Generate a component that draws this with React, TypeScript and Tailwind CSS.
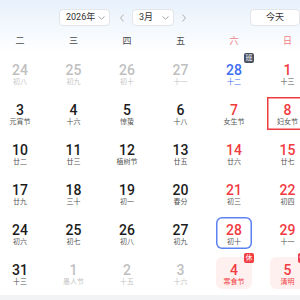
import React from "react";

type Kind = "other" | "normal" | "weekend" | "work" | "holiday";

type Day = {
  n: number;
  lunar: string;
  kind: Kind;
  today?: boolean;
  selected?: boolean;
};

const rows: Day[][] = [
  [
    { n: 24, lunar: "初八", kind: "other" },
    { n: 25, lunar: "初九", kind: "other" },
    { n: 26, lunar: "初十", kind: "other" },
    { n: 27, lunar: "十一", kind: "other" },
    { n: 28, lunar: "十二", kind: "work" },
    { n: 1, lunar: "十三", kind: "weekend" },
  ],
  [
    { n: 3, lunar: "元宵节", kind: "normal" },
    { n: 4, lunar: "十六", kind: "normal" },
    { n: 5, lunar: "惊蛰", kind: "normal" },
    { n: 6, lunar: "十八", kind: "normal" },
    { n: 7, lunar: "女生节", kind: "weekend" },
    { n: 8, lunar: "妇女节", kind: "weekend", selected: true },
  ],
  [
    { n: 10, lunar: "廿二", kind: "normal" },
    { n: 11, lunar: "廿三", kind: "normal" },
    { n: 12, lunar: "植树节", kind: "normal" },
    { n: 13, lunar: "廿五", kind: "normal" },
    { n: 14, lunar: "廿六", kind: "weekend" },
    { n: 15, lunar: "廿七", kind: "weekend" },
  ],
  [
    { n: 17, lunar: "廿九", kind: "normal" },
    { n: 18, lunar: "三十", kind: "normal" },
    { n: 19, lunar: "初一", kind: "normal" },
    { n: 20, lunar: "春分", kind: "normal" },
    { n: 21, lunar: "初三", kind: "weekend" },
    { n: 22, lunar: "初四", kind: "weekend" },
  ],
  [
    { n: 24, lunar: "初六", kind: "normal" },
    { n: 25, lunar: "初七", kind: "normal" },
    { n: 26, lunar: "初八", kind: "normal" },
    { n: 27, lunar: "初九", kind: "normal" },
    { n: 28, lunar: "初十", kind: "weekend", today: true },
    { n: 29, lunar: "十一", kind: "weekend" },
  ],
  [
    { n: 31, lunar: "十三", kind: "normal" },
    { n: 1, lunar: "愚人节", kind: "other" },
    { n: 2, lunar: "十五", kind: "other" },
    { n: 3, lunar: "十六", kind: "other" },
    { n: 4, lunar: "寒食节", kind: "holiday" },
    { n: 5, lunar: "清明", kind: "holiday" },
  ],
];

const weekdays = ["二", "三", "四", "五", "六", "日"];

const numColor: Record<Kind, string> = {
  other: "text-[#bfbfbf]",
  normal: "text-[#1c1c1c]",
  weekend: "text-[#f23b3f]",
  work: "text-[#3d6df2]",
  holiday: "text-[#f23b3f]",
};

const lunarColor: Record<Kind, string> = {
  other: "text-[#c4c4c4]",
  normal: "text-[#555]",
  weekend: "text-[#555]",
  work: "text-[#3d6df2]",
  holiday: "text-[#f23b3f]",
};

const ChevronDown = () => (
  <svg width="7" height="4" viewBox="0 0 7 4" fill="none">
    <path d="M0.5 0.5L3.5 3.2L6.5 0.5" stroke="#9a9a9a" strokeWidth="0.9" />
  </svg>
);

const Arrow = ({ right }: { right?: boolean }) => (
  <svg width="4" height="8" viewBox="0 0 4 8" fill="none">
    <path
      d={right ? "M0.5 0.5L3.5 4L0.5 7.5" : "M3.5 0.5L0.5 4L3.5 7.5"}
      stroke="#a8a8a8"
      strokeWidth="0.9"
    />
  </svg>
);

const SELECTED_BOX = "w-[42px] h-[33px] shadow-[inset_0_0_0_1.5px_#ee3b3e]";
const TODAY_BOX = "w-[36px] h-[32px] rounded-[6px] shadow-[inset_0_0_0_1.5px_#5b82f0]";
const HOLIDAY_BOX = "w-[36px] h-[32px] rounded-[6px] bg-[#fff0f0]";
const PLAIN_BOX = "w-[36px] h-[32px] rounded-[6px]";

const Cell = ({ d }: { d: Day }) => {
  const box = d.selected
    ? SELECTED_BOX
    : d.today
      ? TODAY_BOX
      : d.kind === "holiday"
        ? HOLIDAY_BOX
        : PLAIN_BOX;

  return (
    <div className="h-[40px] flex items-center justify-center">
      <div className={`${box} relative flex flex-col items-center justify-center pt-[2px]`}>
        <span className={`text-[14px] leading-[14px] font-medium ${numColor[d.kind]}`}>
          {d.n}
        </span>
        <span className={`text-[7px] leading-[8px] mt-[1px] ${lunarColor[d.kind]}`}>
          {d.lunar}
        </span>
        {d.kind === "work" && (
          <span className="absolute -top-[4px] -right-[2px] w-[10px] h-[10px] rounded-[2px] bg-[#4a5262] text-white text-[7px] leading-[10px] text-center">
            班
          </span>
        )}
        {d.kind === "holiday" && (
          <span className="absolute -top-[4px] -right-[2px] w-[10px] h-[10px] rounded-[2px] bg-[#f23b3f] text-white text-[7px] leading-[10px] text-center">
            休
          </span>
        )}
      </div>
    </div>
  );
};

export default function App() {
  return (
    <div className="w-[300px] h-[300px] overflow-hidden bg-[#f2f3f5] font-[Roboto,'Noto_Sans_CJK_SC',sans-serif]">
      <div className="bg-white h-[295px]">
        <div className="bg-gradient-to-b from-[#e7f1fc] to-white">
          {/* toolbar */}
          <div className="h-[31px] flex items-start pt-[9px] whitespace-nowrap">
            <div className="ml-[59px] w-[56px] h-[17px] bg-white border border-[#e3e5e8] rounded-[4px] flex items-center justify-between pl-[6px] pr-[4px]">
              <span className="text-[9px] text-[#333]">2026年</span>
              <ChevronDown />
            </div>
            <div className="ml-[10px] h-[17px] flex items-center">
              <Arrow />
            </div>
            <div className="ml-[8px] w-[46px] h-[17px] bg-white border border-[#e3e5e8] rounded-[4px] flex items-center justify-between pl-[6px] pr-[4px]">
              <span className="text-[9px] text-[#333]">3月</span>
              <ChevronDown />
            </div>
            <div className="ml-[8px] h-[17px] flex items-center">
              <Arrow right />
            </div>
            <div className="ml-[64px] w-[50px] shrink-0 h-[17px] bg-white border border-[#e3e5e8] rounded-[4px] flex items-center justify-center">
              <span className="text-[9px] text-[#333]">今天</span>
            </div>
          </div>
          {/* weekday header */}
          <div className="ml-[-6.75px] grid grid-cols-[repeat(6,53.5px)] h-[22px] items-center">
            {weekdays.map((w, i) => (
              <div
                key={w}
                className={`text-center text-[9px] ${i >= 4 ? "text-[#f27a7c]" : "text-[#4d4d4d]"}`}
              >
                {w}
              </div>
            ))}
          </div>
        </div>
        <div className="ml-[-6.75px] grid grid-cols-[repeat(6,53.5px)]">
          {rows.flat().map((d, i) => (
            <Cell key={i} d={d} />
          ))}
        </div>
      </div>
    </div>
  );
}
